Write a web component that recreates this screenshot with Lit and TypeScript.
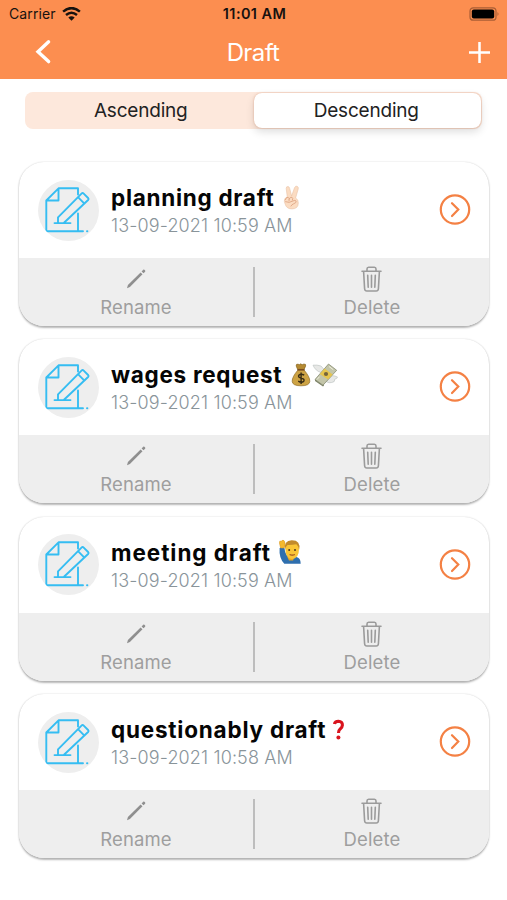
import { LitElement, html, css } from "lit";
import { customElement, property } from "lit/decorators.js";

const emoji: Record<string, unknown> = {
  peace: html`<svg width="18" height="26" viewBox="0 0 18 26">
    <path d="M4.3 12 3.2 3.5Q3.2 1.3 5 1.5 6.3 1.6 6.7 3.5L8.6 11 11.6 2.6Q12.4.8 14 1.2q1.8.6 1.2 2.8L12.6 13q3 1.5 2.7 5.3-.3 5.6-6.4 5.6-5.5 0-6.8-5-2.3-5.4 2.2-6.9Z" fill="#fbdcc2" stroke="#e9c3a6" stroke-width=".6"/>
    <path d="M2.2 15.2q1-3.5 3-2.9 1.6.7.8 3.9M6 14.5q1.1-3 3-2.2 1.3.8.3 3.2M2.2 16.6q4 1.8 7.7-.6 2.4-1.4 3.2.1.6 1.7-2.5 2.7-2 .8-2.8 2.6" fill="none" stroke="#dfa684" stroke-width=".9"/>
  </svg>`,
  money: html`<svg width="48" height="26" viewBox="0 0 48 26">
    <path d="M6.6 7.4Q4.3 3 5.5 2.4q1.6-.7 2.8.3 1.5-1.7 2.8 0 1.9-1.2 3.4-.3 1 .8-1.4 5Z" fill="#b58a32" stroke="#80601f" stroke-width=".6"/>
    <path d="M7 8h6q6 7 5.8 11.3-.2 4.5-8.8 4.5t-8.8-4.5Q1 15 7 8Z" fill="#cda344" stroke="#8f6a22" stroke-width=".7"/>
    <path d="M6.4 7.7h7.2" stroke="#7a4b20" stroke-width="1.5"/>
    <path d="M13.2 13.2q-3-1.8-5.2-.2-1.5 2.2 1.9 3 4.3.9 2.8 3.4-2.2 1.7-5.5-.3M10.1 10.4v11.7" fill="none" stroke="#382c14" stroke-width="1.4"/>
    <path d="M30 10.5Q24.5 9 22 3.2q4-.6 8 .8l3.6 4ZM38 15q3-2.6 8.5 0-.4 2-2.6 2 .2 3.3-3.2 3.5-2.5 1-5.7-1Z" fill="#e7e8e6" stroke="#b9bfbe" stroke-width=".6"/>
    <path d="M24 17.5 37.5 2l8.2 6.3L32 23.2Z" fill="#c3c5a9" stroke="#7d8268" stroke-width=".7"/>
    <path d="m24 17.5 8 5.7 1-.9v1.3l-1 1-8-5.6Z" fill="#7b8164"/>
    <path d="m28.8 12 4.8-5.5 8 6-4.5 5Z" fill="#e6c54e"/>
    <circle cx="35" cy="12" r="2.1" fill="#74643b"/>
    <path d="m26 17.5 2.5-2.8M38 4.5l4.3 3.2" stroke="#eeeede"/>
  </svg>`,
  person: html`<svg width="24" height="26" viewBox="0 0 24 26">
    <path d="M1.6 9q3.7-1.6 5 .6.3 5.4 3.9 8.4h7.8q4.4.8 4.4 6.8H6.3Q.8 19 1.6 9Z" fill="#2f6fae"/>
    <path d="M2.6 9 1.4 4Q1.3 1 3.2 2.3q2-2.4 3.3 0Q8 5 6.2 9Z" fill="#f5b92e" stroke="#d99721" stroke-width=".5"/>
    <path d="M9.3 18h7l-1.2 3.5H11Z" fill="#e7a623"/>
    <path d="M7.4 10q0-7.5 6.4-7.8 7.2.2 7.2 7.8 0 9.7-7 9.9Q7.2 19.6 7.4 10Z" fill="#fac536"/>
    <path d="M7 10.8Q5.7 1.4 13.6 1.2q9.4-.2 7.6 9.6-1-4.4-2.8-5.6-4.8 1-8.8.8Q7.7 7.3 7 10.8Z" fill="#c28a2c"/>
    <circle cx="11.2" cy="11" r="1" fill="#4a321a"/><circle cx="17" cy="11" r="1" fill="#4a321a"/>
    <path d="M11.6 15.4q2.6 1.4 5.2 0" fill="none" stroke="#9c4b1c" stroke-width="1.1"/>
  </svg>`,
  question: html`<svg width="14" height="26" viewBox="0 0 14 26">
    <path d="M2.4 7Q3 4.3 6.4 4.2q4.2.2 4 3.9-.1 2.2-2.2 3.8-1.7 1.5-1.7 4" fill="none" stroke="#d9141e" stroke-width="3.1"/>
    <circle cx="6.4" cy="20.4" r="2" fill="#d9141e"/>
  </svg>`,
};

@customElement("draft-card")
class DraftCard extends LitElement {
  @property() name = "";
  @property() date = "";
  @property() mark = "";
  @property() fit = "";

  static styles = css`
    :host { display: block; height: 164px; border-radius: 25px; overflow: hidden; background: #fff;
      box-shadow: 0 1.5px 2px rgba(0,0,0,.28), 0 0 2px rgba(0,0,0,.12); }
    svg { display: block; flex: none; }
    .info { height: 96px; box-sizing: border-box; padding: 0 18px 0 19px; display: flex; align-items: center; }
    .doc { width: 61px; height: 61px; border-radius: 50%; background: #eee; flex: none; }
    .copy { flex: 1; margin-left: 12px; white-space: nowrap; }
    .title { display: flex; align-items: center; height: 29px; margin-top: 1px; font-weight: 650; font-size: 22.5px; color: #050505; }
    .title svg { margin-left: 9px; }
    .planning { letter-spacing: .71px; }
    .wages { letter-spacing: .7px; }
    .meeting { letter-spacing: .94px; margin-right: -2px; }
    .questionably { letter-spacing: .78px; margin-right: -3px; }
    .date { height: 24px; line-height: 24px; margin-top: 2px; font-size: 18px; font-weight: 350; letter-spacing: .13px; color: #89949a; }
    .actions { height: 68px; background: #eee; display: flex; align-items: center; color: #9e9e9e; font-size: 18.5px; }
    .action { flex: 1; display: flex; flex-direction: column; align-items: center; }
    .label { height: 24px; line-height: 24px; margin-top: 2px; letter-spacing: .12px; }
    .bar { width: 2px; height: 50px; background: #bdbdbd; }
  `;

  render() {
    return html`
      <div class="info">
        <svg class="doc" viewBox="0 0 61 61" fill="none" stroke="#35bdf2" stroke-width="1.9" stroke-linecap="round" stroke-linejoin="round">
          <path d="M40 14.5V8.3H20.5L8.3 20.5v30.7H45M40 33.5v17.7M20.5 8.5v12H8.6M49 51.2h.4"/>
          <path d="M20 42.8v-5.5L43.5 13.6q1.1-1.1 2.2 0l4.4 4.4q1 1 0 2L26 42.8M40 17.1l6.4 6.5M16.5 43.1h16"/>
        </svg>
        <div class="copy">
          <div class="title"><span class=${this.fit}>${this.name}</span>${emoji[this.mark]}</div>
          <div class="date">${this.date}</div>
        </div>
        <svg width="32" height="32" viewBox="0 0 32 32" fill="none" stroke="#f48144">
          <circle cx="16" cy="15.5" r="14.2" stroke-width="2.2"/>
          <path d="m13 9.2 6.3 6.4-6.3 6.4" stroke-width="2.2" stroke-linecap="round"/>
        </svg>
      </div>
      <div class="actions">
        <div class="action">
          <svg width="28" height="28" viewBox="0 0 28 28" fill="#8f8f8f">
            <path d="m5 23.3.9-3.2L18.6 7.4l1.9 1.9L7.9 22Zm14.6-16.9 1.6-1.6q.6-.5 1.2 0l.7.7q.5.6 0 1.2l-1.6 1.6Z"/>
          </svg>
          <div class="label">Rename</div>
        </div>
        <div class="bar"></div>
        <div class="action">
          <svg width="28" height="28" viewBox="0 0 28 28" fill="none" stroke="#9b9b9b" stroke-width="1.6" stroke-linecap="round" stroke-linejoin="round">
            <path d="M4 6.2h19M9 5.8V3.9Q9 2.2 10.6 2.2h5.8q1.6 0 1.6 1.7v1.9M5.6 6.5l1 17.2q.2 2.3 2.2 2.3h9.4q2 0 2.2-2.3l1-17.2M9.7 10.2l.5 12M13.5 10.2v12M17.3 10.2l-.5 12"/>
          </svg>
          <div class="label">Delete</div>
        </div>
      </div>`;
  }
}

@customElement("app-root")
class AppRoot extends LitElement {
  static styles = css`
    :host { display: block; height: 900px; overflow: hidden; background: #fff; font-family: Inter, "Liberation Sans", sans-serif; }
    svg { display: block; }
    .header { height: 79px; background: #fc8e50; }
    .status { height: 27px; display: grid; grid-template-columns: 1fr auto 1fr; align-items: center; padding: 0 7px 0 9px; color: #17120f; font-size: 14px; }
    .carrier { display: flex; align-items: center; gap: 6px; letter-spacing: .1px; }
    .time { font-weight: 600; font-size: 14.5px; letter-spacing: .4px; }
    .battery { justify-self: end; }
    .nav { height: 50px; display: grid; grid-template-columns: 1fr auto 1fr; align-items: center; padding: 0 16px 0 34px; color: #fff; font-size: 24px; }
    .heading { letter-spacing: -.6px; margin-right: 19px; }
    .plus { justify-self: end; }
    .segments { height: 37px; margin: 13px 25px 0; display: grid; grid-template-columns: 1fr 1fr; border-radius: 8px; background: #fde8dc; font-size: 19px; color: #222; }
    .segment { display: flex; align-items: center; justify-content: center; letter-spacing: -.2px; padding-left: 3px; }
    .on { border-radius: 8px; margin: 1px 1px 1px 0; padding: 0 2px 0 0; background: #fff; box-shadow: 0 0 2px rgba(210,120,75,.5), 0 4px 8px rgba(0,0,0,.13); }
    .list { margin: 33px 18px 0 19px; display: flex; flex-direction: column; gap: 13.4px; }
  `;

  render() {
    const drafts = [
      ["planning draft", "13-09-2021 10:59 AM", "peace", "planning"],
      ["wages request", "13-09-2021 10:59 AM", "money", "wages"],
      ["meeting draft", "13-09-2021 10:59 AM", "person", "meeting"],
      ["questionably draft", "13-09-2021 10:58 AM", "question", "questionably"],
    ];
    return html`
      <div class="header">
        <div class="status">
          <div class="carrier">Carrier
            <svg width="19" height="14" viewBox="0 0 19 14" fill="none" stroke="#17120f" stroke-width="2.5">
              <path d="M1.1 4.6q8.4-7 16.8 0M4 8q5.5-4.6 11 0"/><path d="M6.3 10.6q3.2-2.5 6.4 0l-3.2 3.2Z" fill="#17120f" stroke="none"/>
            </svg>
          </div>
          <div class="time">11:01 AM</div>
          <svg class="battery" width="31" height="14" viewBox="0 0 31 14">
            <rect x="1" y=".8" width="26" height="12.4" rx="3.3" fill="none" stroke="#a95e35" stroke-width="1.2"/>
            <rect x="2.8" y="2.5" width="22.4" height="9" rx="2" fill="#000"/><path d="M28.5 5q2 1.8 0 4Z" fill="#a95e35"/>
          </svg>
        </div>
        <div class="nav">
          <svg width="18" height="26" viewBox="0 0 18 26"><path d="M14.6 2.8 4 12.7l10.6 9.9" fill="none" stroke="#fff" stroke-width="3.4" stroke-linecap="round"/></svg>
          <div class="heading">Draft</div>
          <svg class="plus" width="23" height="23" viewBox="0 0 23 23"><path d="M11.5 1v21M1 11.5h21" stroke="#fff" stroke-width="2.5"/></svg>
        </div>
      </div>
      <div class="segments"><div class="segment">Ascending</div><div class="segment on">Descending</div></div>
      <div class="list">
        ${drafts.map(([n, d, m, f]) => html`<draft-card .name=${n} .date=${d} .mark=${m} .fit=${f}></draft-card>`)}
      </div>`;
  }
}
